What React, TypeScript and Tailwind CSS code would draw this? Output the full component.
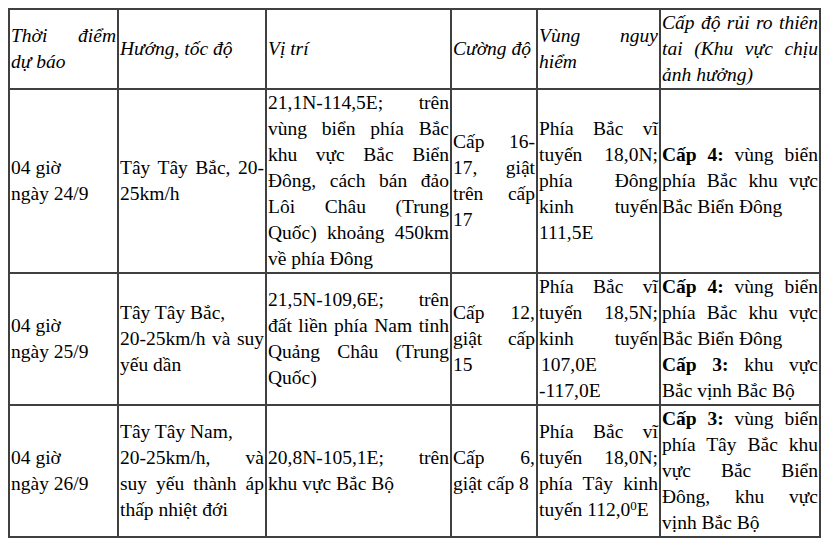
import React from "react";

const cell = "border-2 border-[#404040] px-px py-0 align-middle text-left";

// dòng căn đều hai bên (như Word justify)
function J({ children }: { children: React.ReactNode }) {
  return (
    <span className="block text-justify [text-align-last:justify]">
      {children}
    </span>
  );
}

// dòng cuối đoạn, căn trái
function L({ children }: { children: React.ReactNode }) {
  return <span className="block">{children}</span>;
}

export default function App() {
  return (
    <div className="min-h-screen bg-white p-2 font-['Liberation_Serif','Times_New_Roman',serif] text-[19.5px] leading-[26px] text-black">
      <table className="w-[811px] table-fixed border-collapse">
        <colgroup>
          <col className="w-[109px]" />
          <col className="w-[148px]" />
          <col className="w-[185px]" />
          <col className="w-[86px]" />
          <col className="w-[123px]" />
          <col className="w-[160px]" />
        </colgroup>
        <thead>
          <tr className="italic">
            <th className={`${cell} font-normal`}>
              <J>Thời điểm</J>
              <L>dự báo</L>
            </th>
            <th className={`${cell} font-normal`}>
              <L>Hướng, tốc độ</L>
            </th>
            <th className={`${cell} font-normal`}>
              <L>Vị trí</L>
            </th>
            <th className={`${cell} font-normal`}>
              <L>Cường độ</L>
            </th>
            <th className={`${cell} font-normal`}>
              <J>Vùng nguy</J>
              <L>hiểm</L>
            </th>
            <th className={`${cell} font-normal`}>
              <J>Cấp độ rủi ro thiên</J>
              <J>tai (Khu vực chịu</J>
              <L>ảnh hưởng)</L>
            </th>
          </tr>
        </thead>
        <tbody>
          <tr>
            <td className={cell}>
              <L>04 giờ</L>
              <L>ngày 24/9</L>
            </td>
            <td className={cell}>
              <J>Tây Tây Bắc, 20-</J>
              <L>25km/h</L>
            </td>
            <td className={cell}>
              <J>21,1N-114,5E; trên</J>
              <J>vùng biển phía Bắc</J>
              <J>khu vực Bắc Biển</J>
              <J>Đông, cách bán đảo</J>
              <J>Lôi Châu (Trung</J>
              <J>Quốc) khoảng 450km</J>
              <L>về phía Đông</L>
            </td>
            <td className={cell}>
              <J>Cấp 16-</J>
              <J>17, giật</J>
              <J>trên cấp</J>
              <L>17</L>
            </td>
            <td className={cell}>
              <J>Phía Bắc vĩ</J>
              <J>tuyến 18,0N;</J>
              <J>phía Đông</J>
              <J>kinh tuyến</J>
              <L>111,5E</L>
            </td>
            <td className={cell}>
              <J>
                <b>Cấp 4:</b> vùng biển
              </J>
              <J>phía Bắc khu vực</J>
              <L>Bắc Biển Đông</L>
            </td>
          </tr>
          <tr>
            <td className={cell}>
              <L>04 giờ</L>
              <L>ngày 25/9</L>
            </td>
            <td className={cell}>
              <L>Tây Tây Bắc,</L>
              <J>20-25km/h và suy</J>
              <L>yếu dần</L>
            </td>
            <td className={cell}>
              <J>21,5N-109,6E; trên</J>
              <J>đất liền phía Nam tỉnh</J>
              <J>Quảng Châu (Trung</J>
              <L>Quốc)</L>
            </td>
            <td className={cell}>
              <J>Cấp 12,</J>
              <J>giật cấp</J>
              <L>15</L>
            </td>
            <td className={cell}>
              <J>Phía Bắc vĩ</J>
              <J>tuyến 18,5N;</J>
              <J>kinh tuyến</J>
              <span className="block pl-[2px]">107,0E</span>
              <L>-117,0E</L>
            </td>
            <td className={cell}>
              <J>
                <b>Cấp 4:</b> vùng biển
              </J>
              <J>phía Bắc khu vực</J>
              <L>Bắc Biển Đông</L>
              <J>
                <b>Cấp 3:</b> khu vực
              </J>
              <L>Bắc vịnh Bắc Bộ</L>
            </td>
          </tr>
          <tr>
            <td className={cell}>
              <L>04 giờ</L>
              <L>ngày 26/9</L>
            </td>
            <td className={cell}>
              <L>Tây Tây Nam,</L>
              <J>20-25km/h, và</J>
              <J>suy yếu thành áp</J>
              <L>thấp nhiệt đới</L>
            </td>
            <td className={cell}>
              <J>20,8N-105,1E; trên</J>
              <L>khu vực Bắc Bộ</L>
            </td>
            <td className={cell}>
              <J>Cấp 6,</J>
              <L>giật cấp 8</L>
            </td>
            <td className={cell}>
              <J>Phía Bắc vĩ</J>
              <J>tuyến 18,0N;</J>
              <J>phía Tây kinh</J>
              <L>
                tuyến 112,0<sup className="text-[13px] leading-none">0</sup>E
              </L>
            </td>
            <td className={cell}>
              <J>
                <b>Cấp 3:</b> vùng biển
              </J>
              <J>phía Tây Bắc khu</J>
              <J>vực Bắc Biển</J>
              <J>Đông, khu vực</J>
              <L>vịnh Bắc Bộ</L>
            </td>
          </tr>
        </tbody>
      </table>
      <p className="text-justify">
        Cảnh báo: từ ngày 27/9, áp thấp nhiệt đới suy yếu thành vùng áp thấp.
      </p>
    </div>
  );
}
